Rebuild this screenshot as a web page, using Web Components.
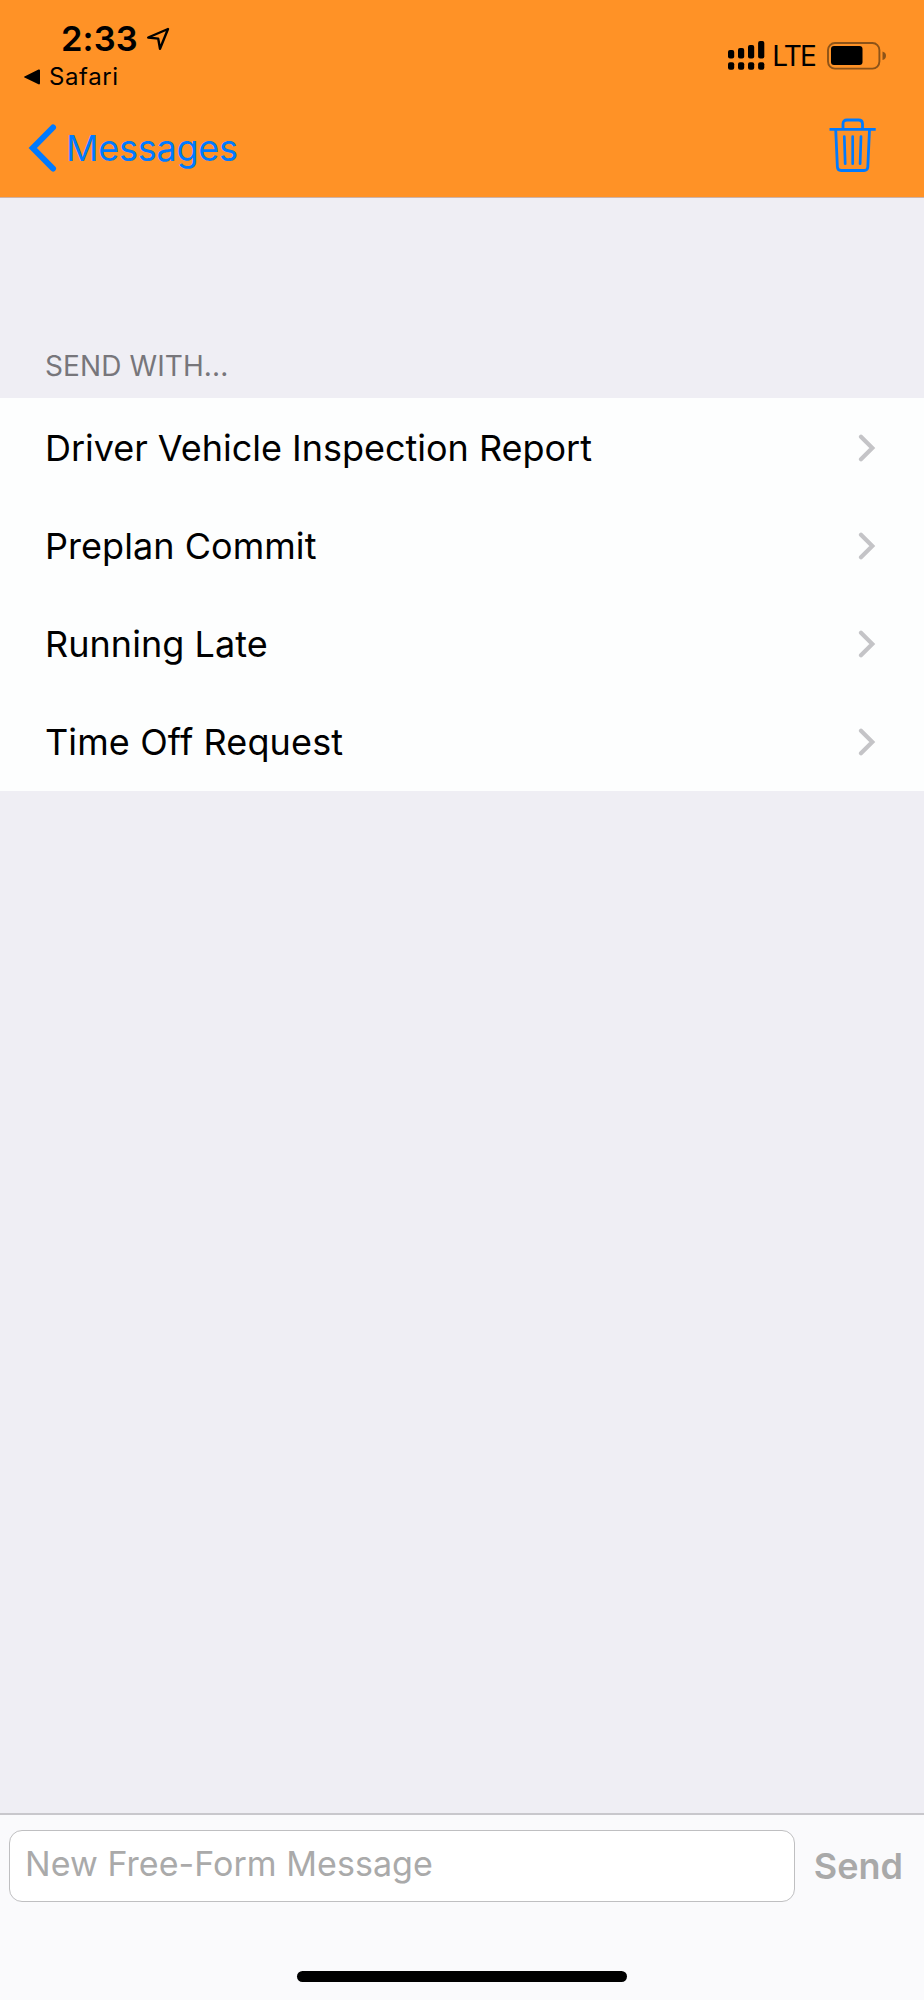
<!DOCTYPE html>
<html lang="en">
<head>
<meta charset="utf-8">
<title>Messages</title>
<style>
    body {
        background: #efeef4;
        font-family: Inter, "Liberation Sans", sans-serif;
        margin: 0;
    }
</style>
</head>
<body>
<message-screen>
    <status-bar slot="header" time="2:33" app="Safari" network="LTE"></status-bar>
    <nav-bar slot="header">Messages</nav-bar>
    <form-list heading="Send with...">
        <form-row style="--tracking: -0.02px">Driver Vehicle Inspection Report</form-row>
        <form-row>Preplan Commit</form-row>
        <form-row>Running Late</form-row>
        <form-row style="--tracking: 0.12px">Time Off Request</form-row>
    </form-list>
    <message-composer slot="footer" placeholder="New Free-Form Message">Send</message-composer>
</message-screen>
<script>
function attach(element, html) {
    const template = document.createElement("template");
    template.innerHTML = html;
    element.attachShadow({ mode: "open" });
    element.shadowRoot.appendChild(template.content.cloneNode(true));
}

customElements.define("message-screen", class extends HTMLElement {
    connectedCallback() {
        attach(this, /* html */`
<style>
    :host {
        display: flex;
        flex-direction: column;
        height: 2000px;
        width: 924px;
    }

    header {
        background: #ff9226;
        border-bottom: 1px solid #cdb2a8;
        box-sizing: border-box;
        height: 198px;
    }

    main {
        flex: 1;
    }
</style>
<header><slot name="header"></slot></header>
<main><slot></slot></main>
<slot name="footer"></slot>
`);
    }
});

customElements.define("status-bar", class extends HTMLElement {
    connectedCallback() {
        attach(this, /* html */`
<style>
    :host {
        box-sizing: border-box;
        color: #000;
        display: flex;
        height: 100px;
        justify-content: space-between;
        padding: 18px 37px 0 24px;
    }

    svg {
        display: block;
        flex: none;
    }

    .time {
        align-items: center;
        display: flex;
        font-size: 34.5px;
        font-weight: 600;
        gap: 8px;
        letter-spacing: 0.1px;
        line-height: 42px;
        padding-left: 37px;
    }

    .app {
        align-items: center;
        display: flex;
        font-size: 24px;
        gap: 9px;
        letter-spacing: 0.6px;
        line-height: 34px;
    }

    .signal {
        align-items: center;
        display: flex;
        font-size: 28px;
        height: 75px;
        letter-spacing: -1.8px;
    }

    .network {
        margin: 0 12px 0 7px;
    }
</style>
<div>
    <div class="time"><span id="time"></span><svg width="24" height="24" viewBox="0 0 24 24" fill="none" stroke="#000" stroke-width="2.4" stroke-linejoin="round"><path d="M22 2 2.2 10.5l10 1.1L14 21.8Z"/></svg></div>
    <div class="app"><svg width="16" height="16" viewBox="0 0 16 16"><path d="M.5 7.4 14.5.5q1.5-.5 1.5 1v12.8q0 1.5-1.5 1L.5 8.6q-1-.6 0-1.2Z"/></svg><span id="app"></span></div>
</div>
<div class="signal">
    <svg width="37" height="30" viewBox="0 0 37 30">
        <rect x="0" y="9" width="6.2" height="8.5" rx="2"/>
        <rect x="10" y="7" width="6.2" height="10.5" rx="2"/>
        <rect x="20" y="4" width="6.2" height="13.5" rx="2"/>
        <rect x="30.1" y="0" width="6.2" height="17.5" rx="2"/>
        <rect x="0" y="21.3" width="6.2" height="7.4" rx="2"/>
        <rect x="10" y="21.3" width="6.2" height="7.4" rx="2"/>
        <rect x="20" y="21.3" width="6.2" height="7.4" rx="2"/>
        <rect x="30.1" y="21.3" width="6.2" height="7.4" rx="2"/>
    </svg>
    <span class="network" id="network"></span>
    <svg width="60" height="28" viewBox="0 0 60 28">
        <rect x="1" y="1" width="51.4" height="25.6" rx="7" fill="none" stroke="#8d5318" stroke-width="1.9"/>
        <rect x="4" y="4" width="31.5" height="19" rx="3"/>
        <path d="M55.5 9.5q3.5 1 3.5 4.3t-3.5 4.3Z" fill="#8d5318"/>
    </svg>
</div>
`);
        for (const name of ["time", "app", "network"]) {
            this.shadowRoot.getElementById(name).textContent = this.getAttribute(name);
        }
    }
});

customElements.define("nav-bar", class extends HTMLElement {
    connectedCallback() {
        attach(this, /* html */`
<style>
    :host {
        align-items: center;
        box-sizing: border-box;
        color: #007aff;
        display: flex;
        height: 96px;
        justify-content: space-between;
        padding: 0 48px 0 28px;
    }

    svg {
        display: block;
    }

    .back {
        align-items: center;
        display: flex;
        font-size: 36px;
        gap: 9px;
        letter-spacing: -0.25px;
    }

    .trash {
        margin-bottom: 6px;
    }
</style>
<div class="back">
    <svg width="29" height="48" viewBox="0 0 29 48" fill="none" stroke="currentColor" stroke-width="6" stroke-linecap="round" stroke-linejoin="miter"><path d="M25 3.5 4.8 24 25 44.5"/></svg>
    <span><slot></slot></span>
</div>
<svg class="trash" width="48" height="56" viewBox="0 0 48 56" fill="none" stroke="currentColor" stroke-width="2.8">
    <path d="M1.5 12.3h46.2M15 12V7q0-4 4-4h11.5q4 0 4 4v5"/>
    <path d="m7.700 12.500 1.700 37.500q.2 3.500 3.700 3.500h23q3.500 0 3.700-3.500l1.700-37.500"/>
    <path d="m16.300 19.500.9 27.200M24.700 19.500v27.200M33 19.500l-.9 27.200" stroke-width="2.7" stroke-linecap="round"/>
</svg>
`);
    }
});

customElements.define("form-list", class extends HTMLElement {
    connectedCallback() {
        attach(this, /* html */`
<style>
    :host {
        display: block;
    }

    h2 {
        box-sizing: border-box;
        color: #77767b;
        font-size: 28px;
        font-weight: 400;
        height: 200px;
        letter-spacing: 0.1px;
        line-height: 34px;
        margin: 0;
        padding: 151px 45px 0;
        text-transform: uppercase;
    }

    .rows {
        background: #fdfefe;
    }
</style>
<h2></h2>
<div class="rows"><slot></slot></div>
`);
        this.shadowRoot.querySelector("h2").textContent = this.getAttribute("heading");
    }
});

customElements.define("form-row", class extends HTMLElement {
    connectedCallback() {
        attach(this, /* html */`
<style>
    :host {
        align-items: center;
        box-sizing: border-box;
        color: #000;
        display: flex;
        font-size: 36px;
        height: 98.2px;
        justify-content: space-between;
        letter-spacing: var(--tracking, 0.05px);
        padding: 1px 48px 0 45px;
    }
</style>
<span><slot></slot></span>
<svg width="18" height="28" viewBox="0 0 18 28" fill="none" stroke="#c4c4c7" stroke-width="4.2" stroke-linecap="round"><path d="m3 2.7 11.3 11.3L3 25.3"/></svg>
`);
    }
});

customElements.define("message-composer", class extends HTMLElement {
    connectedCallback() {
        attach(this, /* html */`
<style>
    :host {
        background: #fafafc;
        border-top: 2px solid #c8c7cc;
        box-sizing: border-box;
        display: flex;
        flex-direction: column;
        height: 187px;
        justify-content: space-between;
        padding: 15px 21px 18px 9px;
    }

    form {
        align-items: center;
        display: flex;
        justify-content: space-between;
    }

    .field {
        background: #fff;
        border: 1px solid #bfbfc1;
        border-radius: 13px;
        box-sizing: border-box;
        color: #aaa;
        font-size: 34px;
        height: 72px;
        letter-spacing: 0.05px;
        line-height: 66px;
        padding-left: 15px;
        width: 786px;
    }

    button {
        background: none;
        border: 0;
        color: #a9a9a9;
        font: inherit;
        font-size: 36px;
        font-weight: 600;
        padding: 0;
    }

    .home {
        align-self: center;
        background: #000;
        border-radius: 6px;
        height: 11px;
        margin-left: 12px;
        width: 330px;
    }
</style>
<form>
    <div class="field"></div>
    <button type="button"><slot></slot></button>
</form>
<div class="home"></div>
`);
        this.shadowRoot.querySelector(".field").textContent = this.getAttribute("placeholder");
    }
});
</script>
</body>
</html>
